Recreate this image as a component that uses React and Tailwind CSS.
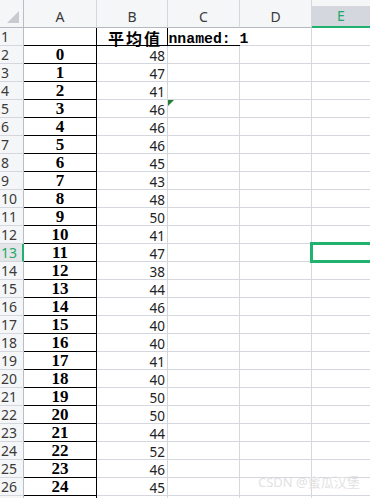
import React from 'react';

const values = [48, 47, 41, 46, 46, 46, 45, 43, 48, 50, 41, 47, 38, 44, 46, 40, 40, 41, 40, 50, 50, 44, 52, 46, 45];

const sans = { fontFamily: '"Noto Sans", "Noto Sans CJK SC", sans-serif' };

const RowHead = ({ n, active }) => (
  <div
    className={`w-[24px] shrink-0 flex items-center pl-px border-b border-b-[#d4d7de] text-[14px] leading-[17px] ${
      active ? 'bg-[#e3e5e9] text-[#1fa866] border-r-2 border-r-[#21b06d]' : 'bg-[#f5f6f8] text-[#3a3a3a] border-r border-r-[#b9bdc5]'
    }`}
    style={sans}
  >
    {n}
  </div>
);

const ColHead = ({ label, w }) => (
  <div className={`${w} shrink-0 flex justify-center pt-[6px] text-[14px] leading-[21px] text-[#3a3a3a] border-r border-r-[#d4d7de] border-b border-b-[#b4b8c0]`} style={sans}>
    {label}
  </div>
);

const DataRow = ({ row, idx, value }) => (
  <div className="flex h-[18px]">
    <RowHead n={row} active={row === 13} />
    <div className="w-[73px] shrink-0 flex justify-center border-b border-r border-black text-[17px] leading-[17px] font-bold text-black font-['Liberation_Serif',serif]">
      {idx}
    </div>
    <div className="w-[71px] shrink-0 flex justify-end pr-[2px] pt-[2px] border-b border-r border-[#d4d7de] text-[13.5px] leading-[16px] text-[#222]" style={sans}>
      {value}
    </div>
    <div className="w-[72px] shrink-0 relative border-b border-r border-[#d4d7de]">
      {row === 5 && (
        <svg className="absolute top-0 left-0" width="6" height="6" viewBox="0 0 6 6">
          <polygon points="0,0 6,0 0,6" fill="#1e7e34" />
        </svg>
      )}
    </div>
    <div className="w-[72px] shrink-0 border-b border-r border-[#d4d7de]" />
    <div className="flex-1 border-b border-[#d4d7de]" />
  </div>
);

export default function App() {
  return (
    <div className="relative w-[370px] h-[498px] overflow-hidden bg-white">
      {/* column header */}
      <div className="flex h-[28px] bg-[#f5f6f8]">
        <div className="w-[24px] shrink-0 flex justify-end items-end pr-[4px] pb-[4px] border-r border-r-[#b9bdc5] border-b border-b-[#b4b8c0]">
          <svg width="12" height="12" viewBox="0 0 12 12">
            <polygon points="12,0 12,12 0,12" fill="#c7cad0" />
          </svg>
        </div>
        <ColHead label="A" w="w-[73px]" />
        <ColHead label="B" w="w-[71px]" />
        <ColHead label="C" w="w-[72px]" />
        <ColHead label="D" w="w-[72px]" />
        <div className="flex-1 flex flex-col">
          <div className="h-[6px]" />
          <div className="flex-1 flex justify-center bg-[#d4d7dd] border-b-2 border-[#21b06d] text-[14px] leading-[20px] text-[#21a86a]" style={sans}>
            E
          </div>
        </div>
      </div>

      {/* row 1: headers */}
      <div className="flex h-[18px]">
        <RowHead n={1} />
        <div className="w-[73px] shrink-0 border-b border-r border-black" />
        <div className="w-[71px] shrink-0 relative z-10 bg-white flex justify-center items-end pl-[6px] border-b border-r border-black text-[16px] leading-[14px] font-bold tracking-[2px] text-black" style={{ fontFamily: '"Noto Sans CJK SC", sans-serif' }}>
          平均值
        </div>
        <div className="w-[72px] shrink-0 flex justify-center items-end border-b border-black text-[14.8px] leading-[12px] font-bold text-black whitespace-nowrap font-['Liberation_Mono',monospace]">
          Unnamed: 1
        </div>
        <div className="w-[72px] shrink-0 border-b border-r border-[#d4d7de]" />
        <div className="flex-1 border-b border-[#d4d7de]" />
      </div>

      {values.map((v, i) => (
        <DataRow key={i} row={i + 2} idx={i} value={v} />
      ))}

      {/* row 27, only its top edge shows */}
      <div className="flex h-[18px]">
        <div className="w-[24px] shrink-0 bg-[#f5f6f8] border-r border-r-[#b9bdc5]" />
        <div className="w-[73px] shrink-0 border-r border-black" />
        <div className="w-[71px] shrink-0 border-r border-[#d4d7de]" />
        <div className="w-[72px] shrink-0 border-r border-[#d4d7de]" />
        <div className="w-[72px] shrink-0 border-r border-[#d4d7de]" />
        <div className="flex-1" />
      </div>

      {/* selected cell E13 */}
      <div className="absolute left-[310px] top-[242px] w-[80px] h-[21px] border-[3px] border-[#21b26f]" />

      {/* watermark */}
      <div className="absolute left-[258px] top-[473px] text-[13px] text-[#e2e2e2] whitespace-nowrap" style={sans}>
        CSDN @蜜瓜汉堡
      </div>
    </div>
  );
}
